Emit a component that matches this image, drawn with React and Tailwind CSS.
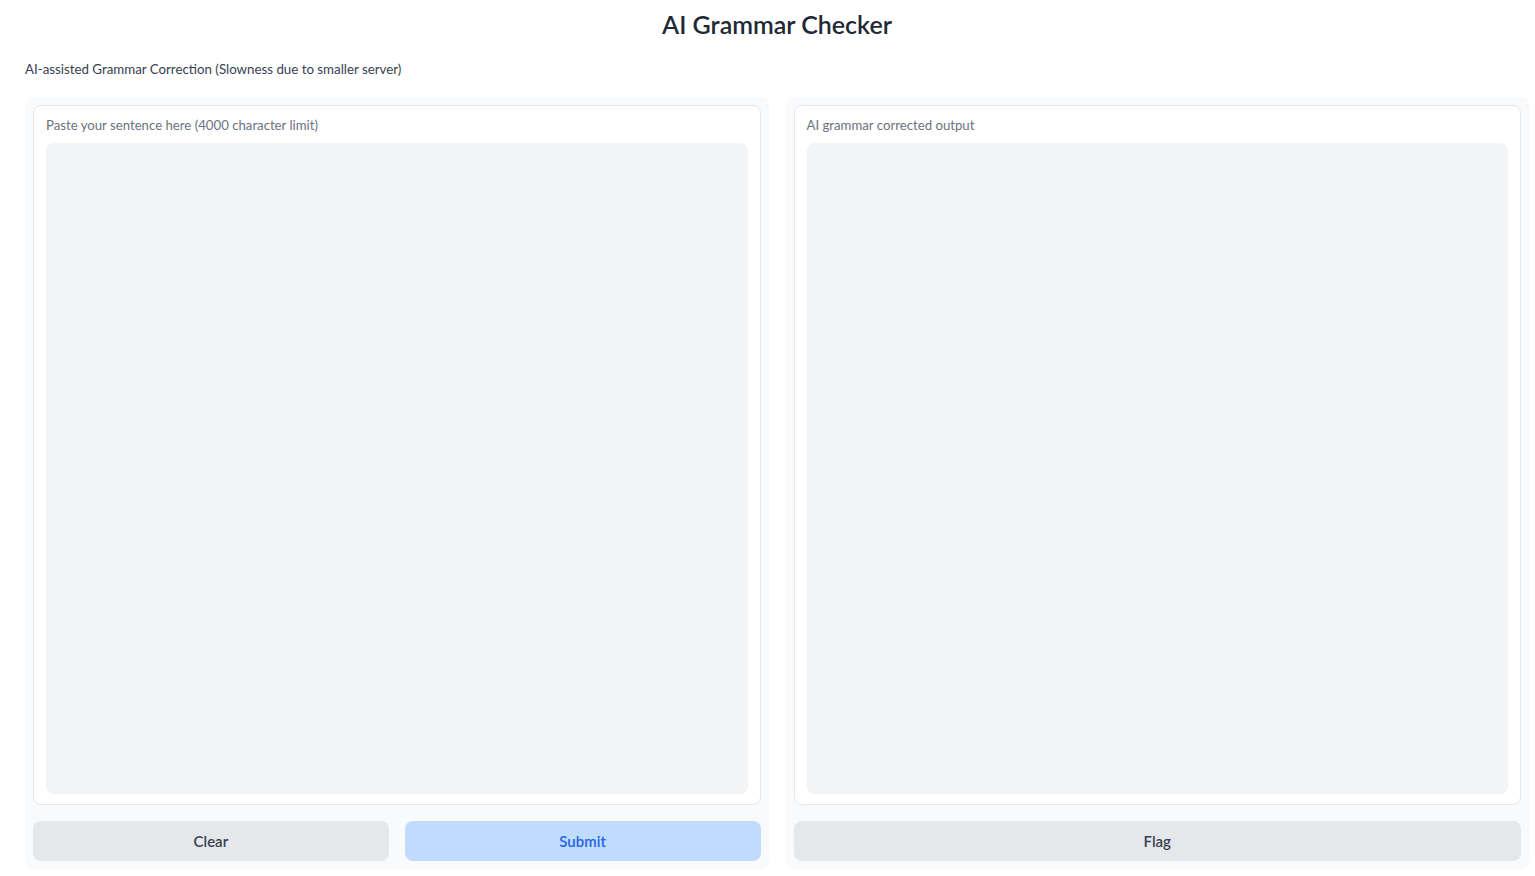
import React from 'react'

function Panel({ label, children }){
  return (
    <div className="flex-1 flex flex-col gap-4 bg-[#f9fafb] rounded-lg p-2">
      <div className="flex flex-col bg-white border border-[#e5e7eb] rounded-lg px-3 pt-[10px] pb-[10px] h-[700px]">
        <div className="text-[13.2px] text-[#6b7280] leading-[18px] mb-[9px]">{label}</div>
        <textarea className="flex-1 w-full bg-[#f3f4f6] rounded-lg resize-none outline-none p-3 text-sm" />
      </div>
      {children}
    </div>
  )
}

export default function App(){
  return (
    <div className="bg-white min-h-screen pl-[25px] pr-[6px] pt-[9px]" style={{ fontFamily: '"Lato", "Noto Sans", sans-serif' }}>
      <h1 className="text-center text-[25px] font-semibold text-[#1f2937] leading-[30px]">AI Grammar Checker</h1>
      <p className="mt-[20px] text-[13.3px] text-[#374151] leading-[20px]">AI-assisted Grammar Correction (Slowness due to smaller server)</p>
      <div className="flex gap-[17px] mt-[18px]">
        <Panel label="Paste your sentence here (4000 character limit)">
          <div className="flex gap-4">
            <button className="flex-1 h-10 rounded-lg bg-[#e5e7eb] text-[#374151] font-semibold text-[15px]">Clear</button>
            <button className="flex-1 h-10 rounded-lg bg-[#bfdbfe] text-[#2563eb] font-semibold text-[15px]">Submit</button>
          </div>
        </Panel>
        <Panel label="AI grammar corrected output">
          <button className="w-full h-10 rounded-lg bg-[#e5e7eb] text-[#374151] font-semibold text-[15px]">Flag</button>
        </Panel>
      </div>
    </div>
  )
}
